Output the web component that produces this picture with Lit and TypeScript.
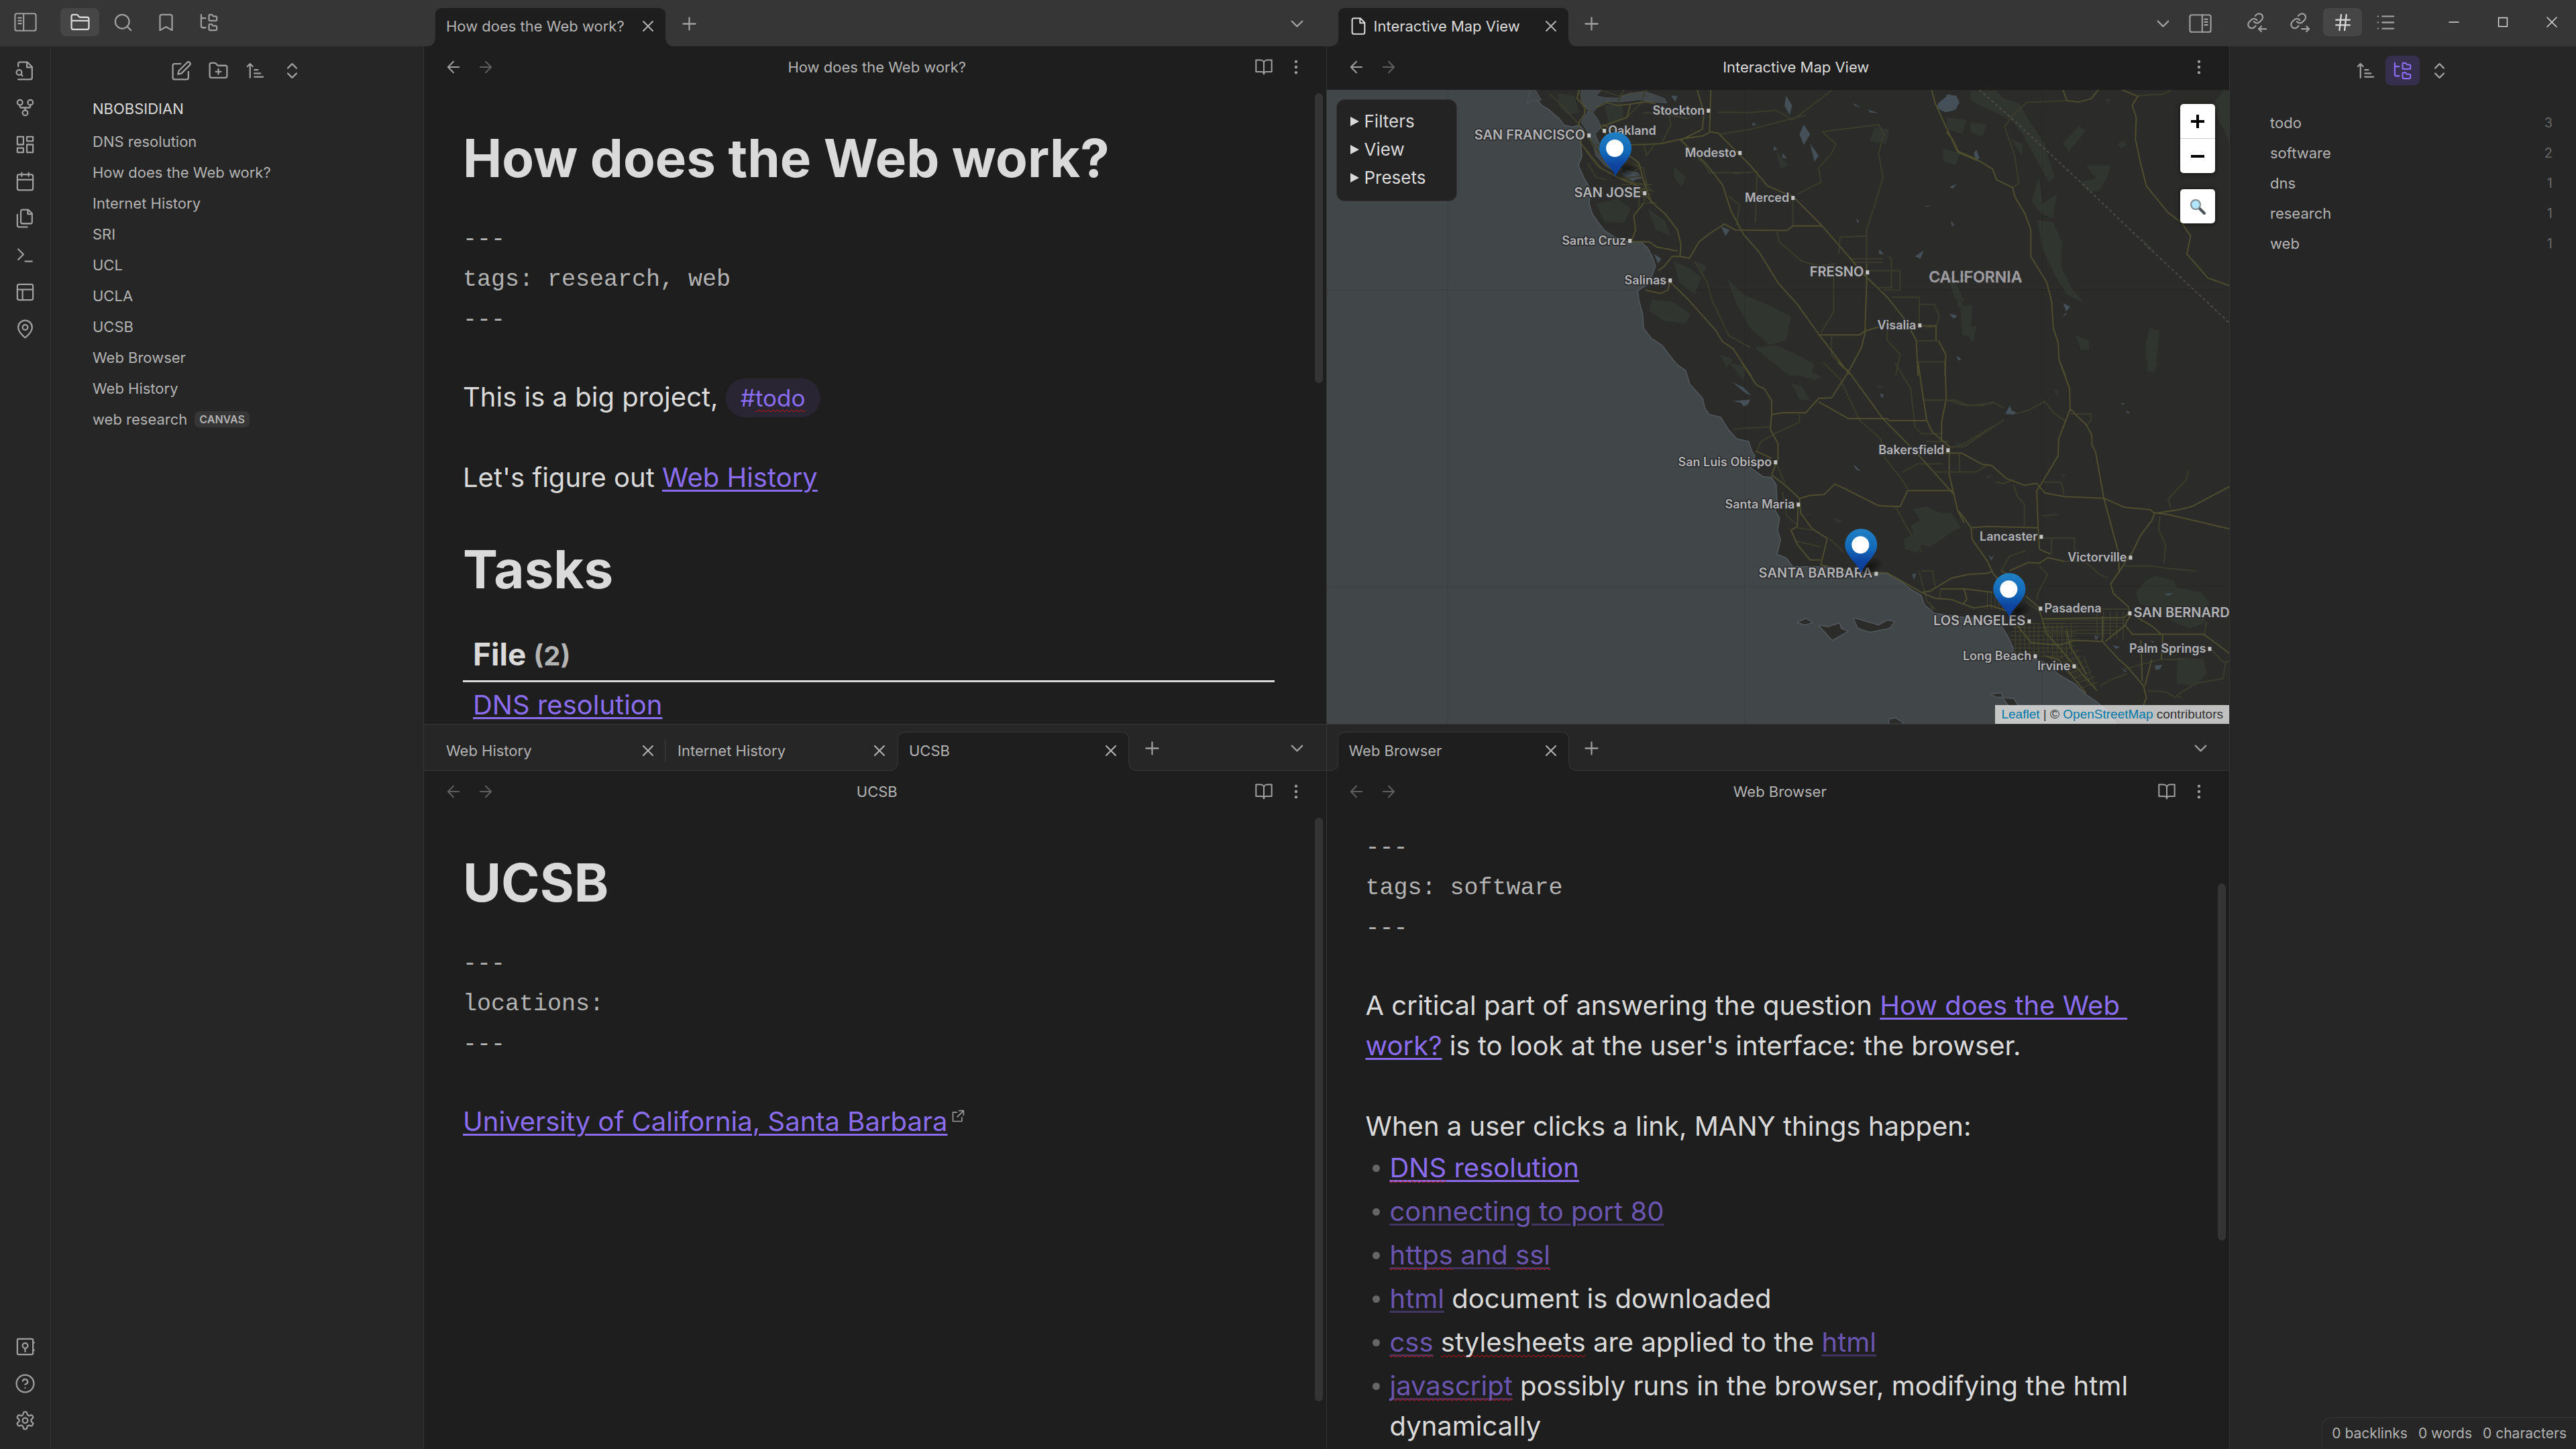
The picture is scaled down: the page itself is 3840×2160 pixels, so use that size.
import { LitElement, html, svg, css, nothing, TemplateResult, SVGTemplateResult } from "lit";
import { customElement, property } from "lit/decorators.js";
import { classMap } from "lit/directives/class-map.js";

const FOLDER =
  "M4 20h16a2 2 0 0 0 2-2V8a2 2 0 0 0-2-2h-7.93a2 2 0 0 1-1.66-.9l-.82-1.2A2 2 0 0 0 7.93 3H4a2 2 0 0 0-2 2v13c0 1.1.9 2 2 2Z";
const CHAIN = svg`<g transform="scale(.85)" stroke-width="2.05"><path d="M10 13a5 5 0 0 0 7.54.54l3-3a5 5 0 0 0-7.07-7.07l-1.72 1.71M14 11a5 5 0 0 0-7.54-.54l-3 3a5 5 0 0 0 7.07 7.07l1.71-1.71"/></g>`;

const ICONS: Record<string, SVGTemplateResult> = {
  sidebarLeft: svg`<rect x="1" y="3" width="22" height="18" rx="2"/><path d="M10 3v18M4.5 7.5h3M4.5 10.5h3M4.5 13.5h3"/>`,
  sidebarRight: svg`<rect x="1" y="3" width="22" height="18" rx="2"/><path d="M14 3v18M16.5 7.5h3M16.5 10.5h3M16.5 13.5h3"/>`,
  folder: svg`<path d="${FOLDER}M2 10h20"/>`,
  folderPlus: svg`<path d="${FOLDER}M12 10v6M9 13h6"/>`,
  search: svg`<circle cx="11" cy="11" r="8"/><path d="m21 21-4.3-4.3"/>`,
  bookmark: svg`<path d="m19 21-7-4-7 4V5a2 2 0 0 1 2-2h10a2 2 0 0 1 2 2v16z"/>`,
  tree: svg`<path d="M13 10h7a1 1 0 0 0 1-1V6a1 1 0 0 0-1-1h-2.5a1 1 0 0 1-.8-.4l-.9-1.2A1 1 0 0 0 15 3h-2a1 1 0 0 0-1 1v5a1 1 0 0 0 1 1ZM13 21h7a1 1 0 0 0 1-1v-3a1 1 0 0 0-1-1h-2.88a1 1 0 0 1-.9-.55l-.44-.9a1 1 0 0 0-.87-.55H13a1 1 0 0 0-1 1v5a1 1 0 0 0 1 1ZM3 3v2c0 1.1.9 2 2 2h3M3 3v13c0 1.1.9 2 2 2h3"/>`,
  fileSearch: svg`<path d="M4 22h14a2 2 0 0 0 2-2V7.5L14.5 2H6a2 2 0 0 0-2 2v3M14 2v6h6M5 17a3 3 0 1 0 0-6 3 3 0 0 0 0 6zM9 18l-1.5-1.5"/>`,
  fork: svg`<circle cx="12" cy="18" r="3"/><circle cx="6" cy="6" r="3"/><circle cx="18" cy="6" r="3"/><path d="M18 9v1a2 2 0 0 1-2 2H8a2 2 0 0 1-2-2V9M12 12v3"/>`,
  dashboard: svg`<rect x="3" y="3" width="7" height="9"/><rect x="14" y="3" width="7" height="5"/><rect x="14" y="12" width="7" height="9"/><rect x="3" y="16" width="7" height="5"/>`,
  calendar: svg`<rect x="3" y="4" width="18" height="18" rx="2"/><path d="M16 2v4M8 2v4M3 10h18"/>`,
  files: svg`<path d="M15.5 2H8.6c-.4 0-.8.2-1.1.5-.3.3-.5.7-.5 1.1v12.8c0 .4.2.8.5 1.1.3.3.7.5 1.1.5h9.8c.4 0 .8-.2 1.1-.5.3-.3.5-.7.5-1.1V6.5L15.5 2zM3 7.6v12.8c0 .4.2.8.5 1.1.3.3.7.5 1.1.5h9.8M15 2v5h5"/>`,
  terminal: svg`<path d="m4 17 6-6-6-6M12 19h8"/>`,
  layout: svg`<rect x="3" y="3" width="18" height="18" rx="2"/><path d="M3 9h18M9 21V9"/>`,
  pin: svg`<path d="M20 10c0 6-8 12-8 12s-8-6-8-12a8 8 0 0 1 16 0Z"/><circle cx="12" cy="10" r="3"/>`,
  vault: svg`<rect x="3" y="3" width="18" height="18" rx="1.5"/><circle cx="12" cy="10.8" r="3"/><path d="M12 13.8v4M22 7.3h.4M22 16h.4"/>`,
  help: svg`<circle cx="12" cy="12" r="10"/><path d="M9.09 9a3 3 0 0 1 5.83 1c0 2-3 3-3 3M12 17h.01"/>`,
  gear: svg`<path d="M12.22 2h-.44a2 2 0 0 0-2 2v.18a2 2 0 0 1-1 1.73l-.43.25a2 2 0 0 1-2 0l-.15-.08a2 2 0 0 0-2.73.73l-.22.38a2 2 0 0 0 .73 2.73l.15.1a2 2 0 0 1 1 1.72v.51a2 2 0 0 1-1 1.74l-.15.09a2 2 0 0 0-.73 2.73l.22.38a2 2 0 0 0 2.73.73l.15-.08a2 2 0 0 1 2 0l.43.25a2 2 0 0 1 1 1.73V20a2 2 0 0 0 2 2h.44a2 2 0 0 0 2-2v-.18a2 2 0 0 1 1-1.73l.43-.25a2 2 0 0 1 2 0l.15.08a2 2 0 0 0 2.73-.73l.22-.39a2 2 0 0 0-.73-2.73l-.15-.08a2 2 0 0 1-1-1.74v-.5a2 2 0 0 1 1-1.74l.15-.09a2 2 0 0 0 .73-2.73l-.22-.38a2 2 0 0 0-2.73-.73l-.15.08a2 2 0 0 1-2 0l-.43-.25a2 2 0 0 1-1-1.73V4a2 2 0 0 0-2-2z"/><circle cx="12" cy="12" r="3"/>`,
  edit: svg`<path d="M11 4H4a2 2 0 0 0-2 2v14a2 2 0 0 0 2 2h14a2 2 0 0 0 2-2v-7M18.5 2.5a2.12 2.12 0 0 1 3 3L12 15l-4 1 1-4 9.5-9.5z"/>`,
  sort: svg`<path d="M11 11h4M11 15h7M11 19h10M9 7 6 4 3 7M6 6v14"/>`,
  upDown: svg`<path d="m7 15 5 5 5-5M7 9l5-5 5 5"/>`,
  close: svg`<path d="M18 6 6 18M6 6l12 12"/>`,
  plus: svg`<path d="M12 5v14M5 12h14"/>`,
  chevron: svg`<path d="m6 9 6 6 6-6"/>`,
  back: svg`<path d="M19 12H5M12 19l-7-7 7-7"/>`,
  forward: svg`<path d="M5 12h14M12 5l7 7-7 7"/>`,
  book: svg`<path d="M2 3h6a4 4 0 0 1 4 4v14a3 3 0 0 0-3-3H2zM22 3h-6a4 4 0 0 0-4 4v14a3 3 0 0 1 3-3h7z"/>`,
  more: svg`<circle cx="12" cy="12" r="1"/><circle cx="12" cy="5" r="1"/><circle cx="12" cy="19" r="1"/>`,
  file: svg`<path d="M14.5 2H6a2 2 0 0 0-2 2v16a2 2 0 0 0 2 2h12a2 2 0 0 0 2-2V7.5zM14 2v6h6"/>`,
  linkIn: svg`${CHAIN}<path d="M22.5 19.5H14M17 16.5l-3 3 3 3"/>`,
  linkOut: svg`${CHAIN}<path d="M14 19.5h8.5M19.5 16.5l3 3-3 3"/>`,
  hash: svg`<path d="M4 9h16M4 15h16M10 3 8 21M16 3l-2 18"/>`,
  list: svg`<path d="M8 5h13M8 12h13M8 19h13M3 5h.01M3 12h.01M3 19h.01"/>`,
  minimize: svg`<path d="M6 12h12"/>`,
  maximize: svg`<path d="M6.5 6.5h11v11h-11z"/>`,
  external: svg`<path d="M10 5H3v16h16v-7M14 2h8v8M22 2 11 13"/>`,
};

const icon = (name: string, size = "") =>
  html`<svg class="icon ${size}" viewBox="0 0 24 24" aria-hidden="true">${ICONS[name]}</svg>`;

const iconStyles = css`
  .icon {
    width: 31px;
    height: 31px;
    flex: none;
    fill: none;
    stroke: currentColor;
    stroke-width: 1.75;
    stroke-linecap: round;
    stroke-linejoin: round;
  }
  .icon.md { width: 28px; height: 28px; }
  .icon.sm { width: 20px; height: 20px; stroke-width: 2; }
  .icon.wide { width: 34px; height: 34px; stroke-width: 1.5; }
  .icon.thin { width: 28px; height: 28px; stroke-width: 1.25; stroke-linejoin: miter; }
  button {
    display: flex;
    align-items: center;
    justify-content: center;
    border: 0;
    padding: 0;
    background: none;
    color: #9f9f9f;
    font: inherit;
  }
`;

/* ---------- Map ---------- */

type Label = { text: string; x: number; y: number; size?: "big" | "state"; dot?: "left" | "right" };

const LABELS: Label[] = [
  { text: "Stockton", x: 563, y: 37, dot: "right" },
  { text: "SAN FRANCISCO", x: 385, y: 74, size: "big", dot: "right" },
  { text: "Oakland", x: 419, y: 67, dot: "left" },
  { text: "Modesto", x: 610, y: 100, dot: "right" },
  { text: "Merced", x: 689, y: 167, dot: "right" },
  { text: "SAN JOSE", x: 468, y: 160, size: "big", dot: "right" },
  { text: "Santa Cruz", x: 446, y: 231, dot: "right" },
  { text: "Salinas", x: 506, y: 290, dot: "right" },
  { text: "FRESNO", x: 800, y: 278, size: "big", dot: "right" },
  { text: "CALIFORNIA", x: 1036, y: 287, size: "state" },
  { text: "Visalia", x: 878, y: 357, dot: "right" },
  { text: "San Luis Obispo", x: 663, y: 561, dot: "right" },
  { text: "Santa Maria", x: 697, y: 624, dot: "right" },
  { text: "SANTA BARBARA", x: 813, y: 727, size: "big", dot: "right" },
  { text: "Bakersfield", x: 920, y: 543, dot: "right" },
  { text: "Lancaster", x: 1059, y: 672, dot: "right" },
  { text: "Victorville", x: 1192, y: 703, dot: "right" },
  { text: "LOS ANGELES", x: 1041, y: 798, size: "big", dot: "right" },
  { text: "Pasadena", x: 1069, y: 779, dot: "left" },
  { text: "SAN BERNARD", x: 1202, y: 786, size: "big", dot: "left" },
  { text: "Palm Springs", x: 1310, y: 839, dot: "right" },
  { text: "Long Beach", x: 1050, y: 850, dot: "right" },
  { text: "Irvine", x: 1108, y: 865, dot: "right" },
];

const PINS = [
  { x: 430, y: 130 },
  { x: 796, y: 721 },
  { x: 1017, y: 787 },
];

/* Each sheet of the map has its own drawing units. */
const NW = "matrix(.6378 0 0 .3571 -7 -134)";
const SW = "matrix(.6378 0 0 .3571 -7 406)";
const NE = "matrix(.5995 0 0 .3571 923 -134)";
const SE = "matrix(.4082 0 0 .3571 723 406)";

const LAND =
  "M497 370L500 410 515 440 530 455 545 480 556 495 565 520 585 528 600 520 612 540 605 600 608 650 600 690 612 740 628 790 625 850 632 890 645 925 660 960 685 990 715 1008 745 1008 762 1035 772 1070 780 1110 772 1150 760 1190 738 1215 742 1260 750 1310 752 1370 770 1410 795 1440 812 1480 830 1520 850 1545 860 1602 890 1662 895 1702 905 1727 932 1740 950 1792 970 1830 997 1840 1005 1882 1012 1902 1003 1952 1030 1987 1050 1990 1062 2022 1064 2102 1060 2132 1070 2162 1065 2212 1072 2252 1064 2312 1085 2327 1100 2362 1180 2364 1260 2392 1320 2392 1350 2422 1380 2462 1400 2482 1408 2522 1430 2557 1450 2562 1490 2572 1540 2582 1586 2607 1602 2652 1615 2702 1615 2737 1637 2762 1666 2747 1695 2767 1720 2812 1759 2852 1785 2897 1810 2927 1832 2962 1860 3030H2120V370Z";

const grid = () => {
  const lines: string[] = [];
  for (let x = 742; x < 950; x += 17) lines.push(`M${x} ${1085 + (x % 5) * 4}V${1215 + (x % 7) * 6}`);
  for (let y = 1090; y < 1240; y += 17) lines.push(`M${720 + (y % 6) * 4} ${y}H${920 + (y % 9) * 6}`);
  for (let i = 0; i < 8; i++) lines.push(`M${880 + i * 14} ${1220 + i * 20}L${960 + i * 12} ${1180 + i * 22}`);
  for (let i = 0; i < 7; i++) lines.push(`M${860 + i * 22} 1225L${950 + i * 14} ${1310 + i * 8}`);
  for (let i = 0; i < 5; i++) lines.push(`M850 ${1075 + i * 14}H${1150 - i * 12}`);
  for (let i = 0; i < 6; i++) lines.push(`M${640 + i * 14} 955V1030`);
  for (let i = 0; i < 5; i++) lines.push(`M${1040 + i * 24} 1040V${1140 + i * 4}`);
  return lines.join("");
};

@customElement("map-view")
export class MapView extends LitElement {
  static styles = [
    iconStyles,
    css`
      :host {
        display: block;
        position: relative;
        flex: 1;
        min-height: 0;
        overflow: hidden;
        background: #414649;
      }
      .canvas { display: block; position: absolute; top: 0; left: 0; width: 100%; height: 100%; }
      .canvas path { vector-effect: non-scaling-stroke; fill: none; stroke-linejoin: round; }
      .canvas .land { fill: #2b2c2a; stroke: #52595e; stroke-width: 3; paint-order: stroke; }
      .canvas .water { fill: #414649; stroke: #4d555b; stroke-width: 1; }
      .canvas .lake { fill: #454f58; }
      .canvas .forest { fill: #31352f; }
      .canvas .road { stroke: #4e4e2e; stroke-width: 2; }
      .canvas .minor { stroke: #3b3c2b; stroke-width: 2; }
      .canvas .dense { stroke: #45462c; stroke-width: 1; }
      .canvas .state { stroke: #504b47; stroke-width: 2; stroke-dasharray: 4 4; }
      .canvas .seam { stroke: #000; stroke-opacity: .1; stroke-width: 1; }
      .canvas .pin { fill: url(#pin); }
      .city {
        font: 600 18px "Inter", "Liberation Sans", sans-serif;
        fill: #b2b2b5;
        stroke: #2b2c2e;
        stroke-width: 3;
        stroke-linejoin: round;
        paint-order: stroke;
      }
      .city.big { font-size: 20px; }
      .city.state { font-size: 23px; fill: #9c9ca2; }
      .dot { fill: #c4c4c4; }
      .panel {
        position: absolute;
        top: 14px;
        left: 14px;
        box-sizing: border-box;
        width: 180px;
        padding: 11px 18px 13px 20px;
        border: 1px solid #333;
        border-radius: 12px;
        background: #232323;
        color: #dadada;
        font: 26px/42px "Inter", sans-serif;
      }
      summary { display: flex; align-items: center; gap: 8px; list-style: none; }
      summary::before {
        content: "";
        border-left: 13px solid #dadada;
        border-top: 7px solid transparent;
        border-bottom: 7px solid transparent;
      }
      .controls {
        position: absolute;
        top: 21px;
        right: 21px;
        display: flex;
        flex-direction: column;
        gap: 24px;
      }
      .bar {
        border-radius: 5px;
        background: #fff;
        box-shadow: 0 1px 7px rgba(0, 0, 0, .65);
        overflow: hidden;
      }
      .bar button { width: 52px; height: 51px; color: #000; }
      .bar button + button { height: 52px; border-top: 1px solid #ccc; }
      .credit {
        position: absolute;
        right: 0;
        bottom: 0;
        padding: 0 9px;
        background: rgba(255, 255, 255, .7);
        color: #333;
        font: 19px/28px "Liberation Sans", Arial, sans-serif;
      }
      .credit a { color: #0078a8; text-decoration: none; }
    `,
  ];

  render() {
    return html`
      <svg class="canvas" viewBox="0 0 1345 945" preserveAspectRatio="xMinYMin slice" role="img" aria-label="Map of California">
        <defs>
          <linearGradient id="pin" x1="0" y1="0" x2="0" y2="1">
            <stop offset="0" stop-color="#2080c4" /><stop offset=".45" stop-color="#1268b8" />
            <stop offset=".72" stop-color="#0e45a0" /><stop offset="1" stop-color="#0c3c98" />
          </linearGradient>
          <radialGradient id="shade"><stop offset="0" stop-opacity=".6" /><stop offset="1" stop-opacity="0" /></radialGradient>
        </defs>
        <g transform=${NW}>
          <path class="land" d=${LAND} />
          <path class="water" d="M605 370L655 370 640 400 660 408 690 410 720 388 760 385 800 412 805 430 770 424 740 416 700 424 660 424 645 440 632 470 645 500 652 530 638 560 652 620 668 660 690 700 738 722 745 745 712 745 690 722 660 690 640 650 632 600 622 555 605 510 622 460 605 420Z" />
          <path class="water" d="M486 370L497 372 512 418 488 420 478 438Z" />
          <path class="forest" d="M550 390L590 400 600 470 575 480 552 440ZM660 440L700 430 705 490 670 520ZM640 850L690 830 722 870 705 930 660 925ZM760 870L800 920 815 985 780 960ZM820 1090L860 1120 885 1160 870 1230 835 1180ZM770 1250L820 1260 860 1310 850 1350 800 1340 765 1300ZM945 1160L985 1230 1040 1270 1095 1320 1085 1420 1045 1440 1000 1370 965 1260ZM1010 1450L1060 1440 1110 1480 1150 1520 1140 1568 1090 1568ZM820 690L850 740 840 780 822 740ZM1060 630L1090 690 1070 700ZM1290 530L1325 540 1318 600 1280 590ZM1450 620L1490 640 1480 690 1450 670ZM1500 1370L1530 1360 1520 1430ZM870 1090L900 1110 890 1140ZM930 1480L960 1500 945 1535ZM1480 1200L1500 1290 1485 1280ZM1515 385L1568 380 1568 450 1530 430Z" />
          <path class="lake" d="M1440 430L1465 393 1487 415 1482 455 1455 468 1435 450ZM1084 400L1098 440 1092 480 1080 440ZM1125 520L1140 560 1125 605 1115 560ZM1140 600L1160 650 1150 675ZM1240 430L1258 448 1244 442ZM1275 458L1300 472 1280 470ZM1005 510L1015 520 1006 526ZM1056 610L1064 625 1054 628ZM1075 640L1086 660 1076 660ZM932 945L952 960 942 985ZM1302 1040L1312 1062 1300 1060ZM1385 1070L1405 1045 1398 1080ZM1468 785L1480 770 1475 780ZM1410 860L1426 855 1412 864ZM1248 910L1255 925 1250 930ZM1470 920L1478 945 1470 935ZM700 720L722 712 740 742 725 758 708 745ZM775 1060L792 1080 785 1100ZM1465 1310L1484 1320 1475 1330ZM1484 1485L1492 1500 1486 1505ZM815 400L830 400 825 425ZM1525 640L1535 655 1530 670Z" />
          <path class="minor" d="M530 390L560 440 600 520M690 430L705 375M755 375L745 430 712 490M750 470L810 480 855 495 890 450M925 468L1000 470 1060 460 1100 500 1190 378M810 480L815 520 795 590M930 560L1000 540 1130 480M838 585L895 690 905 720 1000 720M1168 550L1200 600 1190 640 1160 700 1165 760 1110 810M1168 550L1300 520 1312 560 1300 640 1310 740 1290 860 1272 960 1272 1100M960 725L1016 715 1012 930M950 820L975 855 968 940M1100 820V943M1062 965L1068 1010 1120 1090 1160 1110 1200 1100M1272 985L1210 990 1207 1060M1320 1070L1330 1080V1200H1300M1232 1080H1310M1240 1095H1310M1272 1130H1350V1210H1310M1330 1240H1395V1350M1195 1120V1300L1165 1390M1320 1330V1420L1350 1480 1340 1568M1395 1270H1430L1442 1320 1435 1360 1410 1370M1390 1422H1440M1392 1510H1455M870 1090L900 1180 910 1250 950 1400 1000 1450M1190 1400V1480L1220 1540M752 605L758 650 775 605M620 680L640 740 665 750M700 745L745 735 770 800M610 540L640 620 690 720 745 780M640 600L690 650 740 690M690 680L750 700 760 780M700 770H770M710 790H765M720 810H770M740 770V860M752 770V850" />
          <path class="dense" d="M600 375L610 450 640 470M650 375L690 400 760 378M620 570L645 650 690 730 760 800M612 620L640 690 710 760M700 690L720 720 745 700M705 675L735 690M720 760L760 770M735 780L775 800M730 790L760 840M745 850L780 845" />
          <path class="road" d="M600 375L595 410 615 450 612 480 600 510 605 600 650 700 690 740 730 770 780 860 800 890 830 960 838 1020 836 1070 858 1078 880 1010 905 975 940 935 965 960 1085 962 1100 943H1168" />
          <path class="road" d="M640 450L665 428 690 440 720 435 755 425 778 432M720 435L712 490 650 530 680 600 740 680 752 760 770 850M655 520L700 560 720 605M720 605L790 600 845 578 888 568 905 552M876 375L892 470 888 540 838 585 895 680 935 770 955 880 985 980 1020 1050 1065 1180 1110 1270 1158 1390 1232 1562" />
          <path class="road" d="M908 375L905 550 925 555 1000 690 1040 775 1085 810 1100 820 1168 943 1225 1060 1268 1150 1320 1240 1360 1330 1388 1420 1392 1568M750 850L728 900 732 960 722 1008 765 1010 780 1030 830 1048M836 1070L818 1070 800 1110 785 1130M755 1210L790 1225 808 1210 812 1175 850 1240 880 1300 920 1380 935 1425 960 1455 1002 1568M1158 1398H1255L1270 1380 1300 1365M1440 1422L1457 1480 1455 1568M1272 1100V1180L1268 1390 1260 1450 1230 1550M1424 375L1432 430 1455 520 1485 635 1530 670M1398 1360H1434V1420" />
        </g>
        <g transform=${NE}>
          <path class="forest" d="M60 380L125 378 140 410 180 430 205 500 245 600 250 640 270 740 255 760 215 640 190 560 160 500 110 460 60 420ZM330 525L345 545 305 635 288 600ZM425 600L440 585 448 605 435 620ZM348 690L408 690 400 740 378 800 350 795 335 760 372 745ZM230 740L240 850 275 810 265 910 235 890 212 840ZM225 920L265 925 288 1010 285 1110 310 1200 345 1265 300 1230 270 1150 240 1040ZM690 375L705 380V600L690 540 675 500 665 430ZM480 980L520 1050 500 1040ZM320 1400L355 1420V1460L335 1460ZM505 1370L530 1380 520 1550 500 1550 495 1440ZM35 1280L65 1270 60 1400 40 1400ZM160 580L190 600 188 650ZM0 490L50 500 40 560 5 540ZM60 510L100 520 90 570 60 550ZM0 1130L30 1200 45 1260 20 1240ZM395 410L410 415 400 434Z" />
          <path class="lake" d="M0 395L25 400 33 430 20 460 0 468ZM75 625L82 660 75 670 68 640ZM8 780L25 768 16 788ZM12 925L18 935 14 948ZM290 1265L308 1280 298 1300ZM286 1325L298 1305 300 1310ZM8 1310L26 1315 18 1328ZM25 1485L38 1500 30 1504Z" />
          <path class="minor" d="M476 400L540 393 558 376M165 783L180 765 170 650 145 530 165 480 200 428 300 420" />
          <path class="road" d="M0 550L15 580 30 632 70 660 115 705 125 750 165 783 170 820 195 890 210 960V1070L250 1180 262 1260 266 1370 278 1430 280 1500 296 1568M290 375L300 420 330 426 360 412 378 375M437 375L476 402 462 440 472 490 470 580 480 660 497 775 550 885 585 930 607 985 598 1060 650 1160 705 1193" />
          <path class="state" d="M82 375L160 490 340 770 520 1060 705 1350" />
        </g>
        <g transform=${SW}>
          <path class="land" d="M1112 1085L1130 1070 1144 1085 1128 1094ZM1162 1100L1182 1105 1208 1090 1212 1112 1227 1122 1192 1158ZM1242 1068L1300 1098 1320 1078 1336 1082 1325 1108 1280 1124 1252 1108ZM1325 1490L1340 1486 1358 1508H1325Z" />
          <path class="forest" d="M1060 0L1110 5 1165 60 1150 75 1110 50ZM1095 85L1120 100 1140 160 1115 155ZM950 0L990 20 985 75ZM1195 650L1215 660 1205 675ZM1110 640L1145 632 1135 640Z" />
          <path class="lake" d="M958 82L985 105 1002 138 990 130ZM958 162L1000 155 995 175 985 185 978 168ZM1242 425L1258 455 1248 448ZM1303 130L1312 140 1307 150Z" />
          <path class="minor" d="M1170 0L1210 70 1255 240 1305 320 1315 400 1355 490 1368 530M1338 0L1375 110 1385 270 1400 298H1448M1115 218L1115 250 1060 295 1025 330 1015 370M960 278L1045 270M1355 460L1390 424H1450M1410 330H1465M1405 157L1480 158 1510 180 1568 170M1448 355L1490 350 1568 265M1075 540L1085 640 1110 680M1105 745L1165 770M1185 735L1220 795M1062 425L1080 500M1340 605L1370 700 1400 790M1110 690L1145 700" />
          <path class="road" d="M980 0L1015 95 1033 110 1050 160V218L1075 210H1130L1160 150 1190 148 1230 38 1205 0M1160 165L1230 235H1320L1325 243H1412M1230 38L1310 235 1390 380 1475 550M1392 0L1412 240 1425 290 1465 350V470L1485 620 1500 670M1455 0L1458 150 1447 250V330M1050 218L1047 280 1065 340V400L1050 470 1080 510 1115 568 1118 630 1145 695 1180 735 1165 845 1250 878H1320L1400 960M1115 568L1140 555 1172 552 1198 508 1230 535 1300 598 1350 602 1368 535H1475M1112 600L1110 685 1095 700 1110 760 1140 825H1165M1013 370L1050 400" />
        </g>
        <g transform=${SE}>
          <path class="land" d="M655 1385L690 1382 692 1396 672 1395ZM700 1402L735 1405 752 1435H720Z" />
          <path class="forest" d="M370 615L415 600 460 625 510 630 545 690 520 700 470 740 430 770 400 760 385 795 340 780 335 735 370 720 360 680 395 660ZM1180 960L1220 910 1250 890 1320 910 1330 940 1420 960 1450 1000 1430 1090 1380 1110 1320 1085 1260 1030 1200 1010ZM1335 1230L1430 1240 1440 1300 1400 1350 1330 1340ZM80 655L110 655 95 675ZM880 110L900 115 895 145ZM1225 5L1265 0 1240 45ZM235 95L265 100 245 110ZM630 470L660 475 640 485ZM905 468H930L915 480ZM525 335L550 340 530 355Z" />
          <path class="lake" d="M705 215L722 180 728 200 746 210 735 218ZM150 428L175 452 160 445ZM248 130L262 135 255 148ZM1128 168L1142 172 1132 178ZM1146 202L1160 208 1152 215ZM642 800L655 815 665 802 655 828ZM1285 965L1318 962 1300 975ZM1030 1135L1040 1145 1052 1135 1035 1160ZM1098 1180L1125 1188 1108 1195ZM1250 1265L1278 1262 1270 1280 1255 1284ZM1128 1275L1150 1290 1142 1292ZM1235 1158L1250 1168 1242 1170ZM365 885L380 880 372 908ZM410 1005L420 1030 412 1020Z" />
          <path class="minor" d="M412 157L495 158 560 180 620 180 660 165 700 190M740 215L790 200 850 162 880 210 925 245M700 240L620 300 560 350 500 355M942 215H1018V240L1000 265M838 500H910L920 555M735 510L750 560 775 590V685M670 500L700 505 735 490M440 457H600L640 428M538 380V455M830 733H958V780L985 820 1050 885 1080 900M874 735V800M690 870L720 810 780 785M830 850L860 885 825 960 820 990M920 830L985 830M1140 850L1240 850 1300 860 1400 870M1270 640L1265 700 1290 760 1285 840M1375 450L1365 490 1300 570 1310 610M1060 1030H1150M1430 1142L1440 1080M1524 1250H1500L1450 1190M1510 1250L1500 1320 1400 1340 1330 1390 1350 1400M1225 1370L1290 1375 1330 1400M1050 1350L1100 1320 1150 1300M1360 1240L1270 1240 1140 1280M400 870L440 870 450 945M390 870L420 1000 450 1030M470 945L465 985M430 1000L440 1035M780 1000L820 1030M840 640L895 636" />
          <path class="dense" d=${grid()} />
          <path class="road" d="M905 0L940 110 942 195 900 320 898 390 835 510 820 535 825 690 830 780 870 800M485 378H545L620 425 655 430 710 485 775 513 820 505 850 545 920 560 1065 567 1140 605 1235 615 1250 630 1340 615 1390 600 1524 518M1250 628L1300 635 1524 695M942 195L1000 260 1020 300 1022 345 1035 375 1065 567 1120 800V880M1250 630L1240 660 1200 720 1170 790 1090 925 1100 965 1155 1020 1160 1060 1140 1100 1070 1165M555 650L580 690 640 685 825 690M535 620L555 650M580 690L585 740 640 830 660 880 720 960M400 960L430 955 510 900 570 885 640 880 660 870M400 960L450 985 510 990 590 1025 650 1015 720 1040M720 870L790 835 830 838 860 815 880 820 920 830M470 945L555 945 660 960M555 945L565 990 550 1010" />
          <path class="road" d="M780 975L825 1020 840 1070 1140 1065 1160 1040M1140 1095L1170 1135H1430L1524 1215M1180 1060L1240 1100 1280 1140M1060 1165L1120 1240 1150 1270 1210 1350 1220 1400 1210 1430M740 1085L800 1170 900 1180 960 1160 1060 1165M840 1070L855 1130 940 1240 1040 1370M930 1120L940 1180 1000 1300M1280 1140L1275 1240M1240 1240L1215 1350M1200 1160L1205 1330M850 1225L900 1240 1000 1380M1060 1060V1165M690 870L740 900" />
        </g>
        <path class="seam" d="M180 0V945M623 0V945M1066 0V945M0 298H1345M0 740H1345" />
        ${LABELS.map(
          (l) => svg`<text class="city ${l.size ?? ""}" x=${l.x} y=${l.y}
            text-anchor=${l.dot === "left" ? "start" : "end"}>${l.text}</text>
            ${l.dot ? svg`<rect class="dot" x=${l.dot === "right" ? l.x + 3 : l.x - 8} y=${l.y - 9} width="5" height="6"/>` : nothing}`
        )}
        ${PINS.map(
          (p) => svg`<g transform="translate(${p.x} ${p.y})">
            <ellipse cx="16" cy="-4" rx="22" ry="13" fill="url(#shade)" transform="rotate(-25)"/>
            <path class="pin" d="M0 0C-3-14-24-26-24-43A24 24 0 0 1 24-43C24-26 3-14 0 0Z"/>
            <circle cx="-1" cy="-43" r="13" fill="#fff"/></g>`
        )}
      </svg>
      <div class="panel">
        <details><summary>Filters</summary></details>
        <details><summary>View</summary></details>
        <details><summary>Presets</summary></details>
      </div>
      <div class="controls">
        <div class="bar">
          <button aria-label="Zoom in"><svg width="20" height="20" viewBox="0 0 20 20"><path d="M10 0v20M0 10h20" stroke="#000" stroke-width="4" /></svg></button>
          <button aria-label="Zoom out"><svg width="20" height="20" viewBox="0 0 20 20"><path d="M0 10h20" stroke="#000" stroke-width="4" /></svg></button>
        </div>
        <div class="bar">
          <button aria-label="Search map">
            <svg width="24" height="24" viewBox="0 0 24 24">
              <path d="M14 14l8 8" stroke="#4b5257" stroke-width="4" stroke-linecap="round" />
              <circle cx="9" cy="9" r="7" fill="#b3e5fc" stroke="#7d8a90" stroke-width="2" />
            </svg>
          </button>
        </div>
      </div>
      <div class="credit"><a href="#leaflet">Leaflet</a> | © <a href="#osm">OpenStreetMap</a> contributors</div>
    `;
  }
}

/* ---------- Workspace ---------- */

type Tab = { title: string; icon?: string; active?: boolean };

@customElement("pane-leaf")
export class PaneLeaf extends LitElement {
  @property({ attribute: false }) tabs: Tab[] = [];
  @property() heading = "";
  @property({ type: Boolean }) top = false;
  @property({ type: Boolean }) reader = false;
  @property({ type: Boolean }) bright = false;
  @property({ type: Boolean }) visited = false;
  @property({ type: Boolean }) toggle = false;

  static styles = [
    iconStyles,
    css`
      :host {
        display: flex;
        flex-direction: column;
        min-width: 0;
        min-height: 0;
        overflow: hidden;
        box-sizing: border-box;
        background: #1e1e1e;
        color: #b3b3b3;
        --strip: #262626;
        --line: #363636;
      }
      :host([top]) { --strip: #363636; }
      .strip {
        display: flex;
        flex: none;
        box-sizing: border-box;
        height: 69px;
        padding: 0 15px 0 16px;
        background: var(--strip);
        border-bottom: 1px solid var(--line);
      }
      .tab {
        position: relative;
        display: flex;
        align-items: center;
        gap: 9px;
        box-sizing: border-box;
        width: 345px;
        height: 58px;
        margin-top: 11px;
        padding: 0 12px 3px 16px;
        border: 1px solid transparent;
        border-bottom: 0;
        font-size: 22px;
      }
      .tab span { flex: 1; white-space: nowrap; }
      .tab button { color: #b3b3b3; }
      .tab.divided::after {
        content: "";
        position: absolute;
        right: 0;
        top: 10px;
        height: 34px;
        border-right: 1px solid #3f3f3f;
      }
      .tab.active {
        background: #1e1e1e;
        border-color: var(--line);
        border-radius: 10px 10px 0 0;
      }
      .tab.active::before,
      .tab.active::after {
        content: "";
        position: absolute;
        bottom: 0;
        width: 20px;
        height: 20px;
        border-radius: 50%;
        box-shadow: inset 0 0 0 1px var(--line), 0 0 0 40px #1e1e1e;
      }
      .tab.active::before { left: -21px; clip-path: inset(50% -1px 0 50%); }
      .tab.active::after { right: -21px; clip-path: inset(50% 50% 0 -1px); }
      .strip > button { width: 56px; height: 42px; margin-top: 14px; }
      .strip > .new { margin-left: 6px; }
      .grow { flex: 1; }
      .head {
        display: flex;
        align-items: center;
        box-sizing: border-box;
        height: 65px;
        padding: 0 21px 3px 20px;
        flex: none;
      }
      .head button { width: 48px; height: 48px; }
      .head .dim { opacity: .5; }
      .head h2 {
        flex: 1;
        margin: 0 0 0 7px;
        font-size: 22px;
        font-weight: 400;
        text-align: center;
      }
      :host([bright]) .tab, :host([bright]) h2 { color: #dadada; }
    `,
  ];

  render() {
    return html`
      <div class="strip">
        ${this.tabs.map(
          (t, i) => html`<div class=${classMap({ tab: true, active: !!t.active, divided: !t.active && !this.tabs[i + 1]?.active })}>
            ${t.icon ? icon(t.icon, "md") : nothing}<span>${t.title}</span>
            <button aria-label="Close">${icon("close", "md")}</button>
          </div>`
        )}
        <button class="new" aria-label="New tab">${icon("plus")}</button>
        <div class="grow"></div>
        <button aria-label="Tab list">${icon("chevron")}</button>
        ${this.toggle ? html`<button aria-label="Toggle right sidebar">${icon("sidebarRight", "wide")}</button>` : nothing}
      </div>
      <header class="head">
        <button class=${this.visited ? "" : "dim"} aria-label="Back">${icon("back", "md")}</button>
        <button class="dim" aria-label="Forward">${icon("forward", "md")}</button>
        <h2>${this.heading}</h2>
        ${this.reader ? html`<button aria-label="Reading view">${icon("book", "md")}</button>` : nothing}
        <button aria-label="More options">${icon("more", "md")}</button>
      </header>
      <slot></slot>
    `;
  }
}

@customElement("app-root")
export class AppRoot extends LitElement {
  static styles = [
    iconStyles,
    css`
      :host {
        display: block;
        position: relative;
        height: 100vh;
        overflow: hidden;
        background: #262626;
        color: #b3b3b3;
        font-family: "Inter", "Liberation Sans", sans-serif;
        font-size: 22px;
      }
      .app {
        display: grid;
        grid-template-columns: 632px minmax(0, 1fr) 517px;
        grid-template-rows: minmax(0, 1fr);
        height: 100%;
      }
      .dock { display: flex; flex-direction: column; min-height: 0; }
      .bar {
        display: flex;
        align-items: center;
        flex: none;
        box-sizing: border-box;
        height: 69px;
        padding-bottom: 3px;
        background: #363636;
      }
      .bar .fold { width: 76px; height: 42px; }
      .views { display: flex; gap: 6px; flex: 1; padding-left: 14px; }
      .right .views { padding-left: 12px; }
      .views button { width: 58px; height: 42px; border-radius: 8px; }
      .views .on { background: #464646; color: #dadada; }
      .window { display: flex; }
      .window button { width: 73px; height: 42px; color: #dadada; }
      .body { display: flex; flex: 1; min-height: 0; }
      .ribbon {
        display: flex;
        flex-direction: column;
        align-items: center;
        gap: 7px;
        box-sizing: border-box;
        width: 76px;
        padding: 12px 0 19px;
        border-right: 1px solid #363636;
      }
      .ribbon button { width: 48px; height: 48px; }
      .spacer { flex: 1; }
      .side {
        flex: 1;
        display: flex;
        flex-direction: column;
        padding-top: 14px;
        border-right: 1px solid #363636;
      }
      .right .side { border-right: 0; border-left: 1px solid #363636; }
      .actions { display: flex; justify-content: center; gap: 4px; padding-right: 2px; }
      .actions button { width: 51px; height: 44px; border-radius: 8px; }
      .actions .on { background: #362f4d; color: #8a6cef; }
      .vault { margin: 12px 0 3px 62px; color: #dadada; font-size: 22px; font-weight: 400; line-height: 46px; }
      ul { list-style: none; margin: 0; padding: 0; }
      .files { padding-left: 62px; line-height: 46px; }
      .files a { display: flex; align-items: center; gap: 11px; height: 46px; color: inherit; text-decoration: none; }
      .badge {
        padding: 0 7px;
        border-radius: 7px;
        background: #363636;
        font-size: 16px;
        font-weight: 600;
        line-height: 24px;
      }
      .tags { margin-top: 34px; padding: 0 35px 0 60px; line-height: 45px; }
      .tags li { display: flex; justify-content: space-between; }
      .tags a { color: inherit; text-decoration: none; }
      .tags .count { color: #666; font-size: 20px; }
      .panes {
        display: grid;
        grid-template-columns: repeat(2, minmax(0, 1fr));
        grid-template-rows: repeat(2, minmax(0, 1fr));
        min-height: 0;
      }
      .upper { border-bottom: 1px solid #363636; }
      .west { border-right: 1px solid #363636; }
      .note {
        position: relative;
        flex: 1;
        min-height: 0;
        overflow: hidden;
        padding: 54px 76px 0 58px;
        color: #dadada;
        font-size: 40px;
        line-height: 60px;
      }
      .note.scrolled { padding-top: 15px; }
      .column { max-width: 1210px; }
      .thumb {
        position: absolute;
        right: 5px;
        width: 12px;
        border-radius: 6px;
        background: #343434;
      }
      .thumb.first { top: 5px; height: 432px; }
      .thumb.second { top: 5px; height: 870px; }
      .thumb.third { top: 103px; height: 532px; }
      .column h1 { margin: 0; font-size: 78px; font-weight: 700; line-height: 96px; }
      .title { padding-bottom: 38px; }
      .section { padding-top: 59px; }
      .column p { margin: 0; white-space: break-spaces; }
      .column .meta { margin-bottom: 60px; color: #b3b3b3; }
      .meta code { display: block; height: 60px; font: inherit; }
      .meta span { font-family: "Liberation Mono", monospace; font-size: 35px; line-height: 35px; }
      .gap { padding-bottom: 60px; }
      .note a {
        color: #8a6cef;
        text-decoration: underline 3px;
        text-underline-offset: 4px;
      }
      .note a.faded { color: #6a55b0; text-decoration-color: #3f3560; }
      .note .tag {
        display: inline-block;
        padding: 0 22px;
        border-radius: 30px;
        background: #292533;
        font-size: 35px;
        line-height: 58px;
        text-decoration: none;
      }
      .typo {
        text-decoration: underline wavy #e01010 1px;
        text-underline-offset: 4px;
        text-decoration-skip-ink: none;
      }
      table { width: 100%; margin-top: 48px; border-collapse: collapse; }
      th { padding: 0 15px 9px; border-bottom: 3px solid #dadada; text-align: left; font-size: 46px; font-weight: 700; }
      th small { color: #b3b3b3; font-size: 40px; line-height: 40px; }
      td { padding: 4px 15px; }
      .bullets li { position: relative; padding: 2px 0 3px 36px; }
      .bullets li::before {
        content: "";
        position: absolute;
        left: 10px;
        top: 27px;
        width: 11px;
        height: 11px;
        border-radius: 50%;
        background: #666;
      }
      .ext { display: inline-flex; vertical-align: top; padding: 12px 0 0 6px; color: #999; }
      .status {
        position: absolute;
        right: 0;
        bottom: 0;
        display: flex;
        gap: 16px;
        box-sizing: border-box;
        height: 47px;
        padding: 0 14px 0 14px;
        border: 1px solid #363636;
        border-width: 1px 0 0 1px;
        border-radius: 14px 0 0 0;
        background: #262626;
        font-size: 21px;
        line-height: 46px;
      }
    `,
  ];

  private button(name: string, label: string, cls = "", size = ""): TemplateResult {
    return html`<button class=${cls} aria-label=${label}>${icon(name, size)}</button>`;
  }

  private meta(line: string) {
    return html`<div class="meta">
      <code><span>---</span></code><code><span>${line}</span></code><code><span>---</span></code>
    </div>`;
  }

  render() {
    const files = ["DNS resolution", "How does the Web work?", "Internet History", "SRI", "UCL", "UCLA", "UCSB", "Web Browser", "Web History"];
    const tags: [string, number][] = [["todo", 3], ["software", 2], ["dns", 1], ["research", 1], ["web", 1]];
    return html`
      <div class="app">
        <aside class="dock">
          <div class="bar">
            ${this.button("sidebarLeft", "Toggle left sidebar", "fold", "wide")}
            <div class="views">
              ${this.button("folder", "Files", "on")} ${this.button("search", "Search")}
              ${this.button("bookmark", "Bookmarks")} ${this.button("tree", "Folders")}
            </div>
          </div>
          <div class="body">
            <nav class="ribbon">
              ${this.button("fileSearch", "Quick switcher")} ${this.button("fork", "Graph view")}
              ${this.button("dashboard", "Canvas")} ${this.button("calendar", "Daily note")}
              ${this.button("files", "Templates")} ${this.button("terminal", "Command palette")}
              ${this.button("layout", "Workspaces")} ${this.button("pin", "Map view")}
              <div class="spacer"></div>
              ${this.button("vault", "Vault")} ${this.button("help", "Help")} ${this.button("gear", "Settings")}
            </nav>
            <section class="side">
              <div class="actions">
                ${this.button("edit", "New note")} ${this.button("folderPlus", "New folder")}
                ${this.button("sort", "Sort order")} ${this.button("upDown", "Expand all")}
              </div>
              <h2 class="vault">NBOBSIDIAN</h2>
              <ul class="files">
                ${files.map((f) => html`<li><a href="#note">${f}</a></li>`)}
                <li><a href="#canvas">web research <span class="badge">CANVAS</span></a></li>
              </ul>
            </section>
          </div>
        </aside>

        <main class="panes">
          <pane-leaf class="upper west" top reader visited heading="How does the Web work?"
            .tabs=${[{ title: "How does the Web work?", active: true }]}>
            <article class="note">
              <div class="column">
                <h1 class="title">How does the Web work?</h1>
                ${this.meta("tags: research, web")}
                <p class="gap">This is a big project, <a class="tag" href="#todo">#<span class="typo">todo</span></a></p>
                <p>Let's figure out <a href="#web-history">Web History</a></p>
                <h1 class="section">Tasks</h1>
                <table>
                  <thead><tr><th>File <small>(2)</small></th></tr></thead>
                  <tbody><tr><td><a href="#dns">DNS resolution</a></td></tr></tbody>
                </table>
              </div>
              <div class="thumb first"></div>
            </article>
          </pane-leaf>

          <pane-leaf class="upper" top bright visited toggle heading="Interactive Map View"
            .tabs=${[{ title: "Interactive Map View", icon: "file", active: true }]}>
            <map-view></map-view>
          </pane-leaf>

          <pane-leaf class="west" reader heading="UCSB"
            .tabs=${[{ title: "Web History" }, { title: "Internet History" }, { title: "UCSB", active: true }]}>
            <article class="note">
              <div class="column">
                <h1 class="title">UCSB</h1>
                ${this.meta("locations:")}
                <p><a href="#ucsb">University of California, Santa Barbara</a><span class="ext">${icon("external", "sm")}</span></p>
              </div>
              <div class="thumb second"></div>
            </article>
          </pane-leaf>

          <pane-leaf reader heading="Web Browser" .tabs=${[{ title: "Web Browser", active: true }]}>
            <article class="note scrolled">
              <div class="column">
                ${this.meta("tags: software")}
                <p class="gap">A critical part of answering the question <a href="#how">How does the Web work?</a> is to look at the user's interface: the browser.</p>
                <p>When a user clicks a link, MANY things happen:</p>
                <ul class="bullets">
                  <li><a href="#dns"><span class="typo">DNS</span> resolution</a></li>
                  <li><a class="faded" href="#port">connecting to port 80</a></li>
                  <li><a class="faded" href="#ssl"><span class="typo">https</span> and <span class="typo">ssl</span></a></li>
                  <li><a class="faded" href="#html">html</a> document is downloaded</li>
                  <li><a class="faded" href="#css"><span class="typo">css</span></a> <span class="typo">stylesheets</span> are applied to the <a class="faded" href="#html">html</a></li>
                  <li><a class="faded" href="#js"><span class="typo">javascript</span></a> possibly runs in the browser, modifying the html dynamically</li>
                </ul>
              </div>
              <div class="thumb third"></div>
            </article>
          </pane-leaf>
        </main>

        <aside class="dock right">
          <div class="bar">
            <div class="views">
              ${this.button("linkIn", "Backlinks")} ${this.button("linkOut", "Outgoing links")}
              ${this.button("hash", "Tags", "on")} ${this.button("list", "Outline")}
            </div>
            <div class="window">
              ${this.button("minimize", "Minimize", "", "thin")} ${this.button("maximize", "Maximize", "", "thin")}
              ${this.button("close", "Close window", "", "thin")}
            </div>
          </div>
          <div class="body">
            <section class="side">
              <div class="actions">
                ${this.button("sort", "Sort order")} ${this.button("tree", "Nested tags", "on")} ${this.button("upDown", "Expand all")}
              </div>
              <ul class="tags">
                ${tags.map(([t, n]) => html`<li><a href="#tag">${t}</a><span class="count">${n}</span></li>`)}
              </ul>
            </section>
          </div>
        </aside>
      </div>
      <footer class="status"><span>0 backlinks</span><span>0 words</span><span>0 characters</span></footer>
    `;
  }
}
